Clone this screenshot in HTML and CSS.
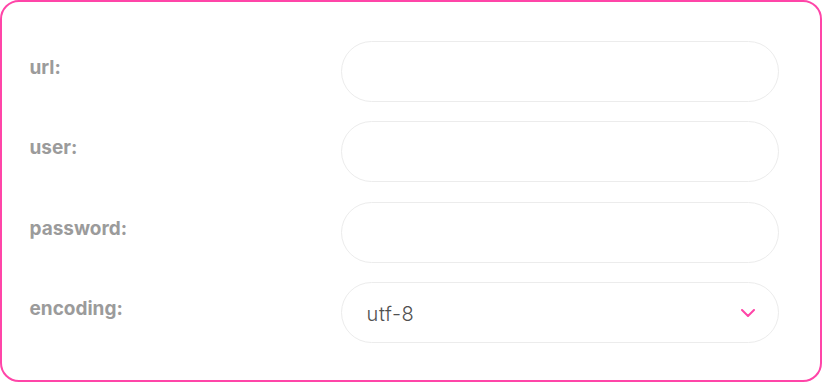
FILE: index.html
```html
<!DOCTYPE html>
<html>
<head>
<meta charset="utf-8">
<link rel="stylesheet" href="styles.css">
</head>
<body>
<form class="card">
  <div class="row">
    <label class="label" for="url">url:</label>
    <input class="field" id="url" type="text">
  </div>
  <div class="row">
    <label class="label" for="user">user:</label>
    <input class="field" id="user" type="text">
  </div>
  <div class="row">
    <label class="label" for="password">password:</label>
    <input class="field" id="password" type="password">
  </div>
  <div class="row">
    <label class="label" for="encoding">encoding:</label>
    <div class="field select">
      <span class="value">utf-8</span>
      <svg class="chevron" width="14" height="8" viewBox="0 0 14 8"><path d="M1 1 L7 7 L13 1" fill="none" stroke="#ff45a8" stroke-width="2" stroke-linecap="round" stroke-linejoin="round"/></svg>
    </div>
  </div>
</form>
</body>
</html>
```
FILE: styles.css
```css
html, body {
  margin: 0;
  padding: 0;
  background: #ffffff;
}
body {
  font-family: "Inter", "Noto Sans", sans-serif;
}
.card {
  box-sizing: border-box;
  width: 822px;
  height: 382px;
  margin: 0;
  border: 2.5px solid #ff45a8;
  border-radius: 19px;
  padding: 38.5px 40.5px 0 27.5px;
  display: flex;
  flex-direction: column;
  gap: 19.67px;
}
.row {
  display: flex;
  align-items: flex-start;
}
.label {
  width: 311px;
  flex: none;
  padding-top: 16px;
  font-size: 19px;
  font-weight: 700;
  color: #9b9b9b;
  line-height: 22px;
}
.field {
  box-sizing: border-box;
  width: 438px;
  height: 61px;
  margin: 0;
  border: 1px solid #ececec;
  border-radius: 31px;
  background: #fff;
  outline: none;
  font-family: inherit;
}
.select {
  display: flex;
  align-items: center;
  justify-content: space-between;
  padding: 0 23px 0 25px;
}
.value {
  font-size: 20px;
  color: #505050;
  font-weight: 300;
  letter-spacing: 0.6px;
  padding-top: 2px;
}
.chevron {
  display: block;
}
```
